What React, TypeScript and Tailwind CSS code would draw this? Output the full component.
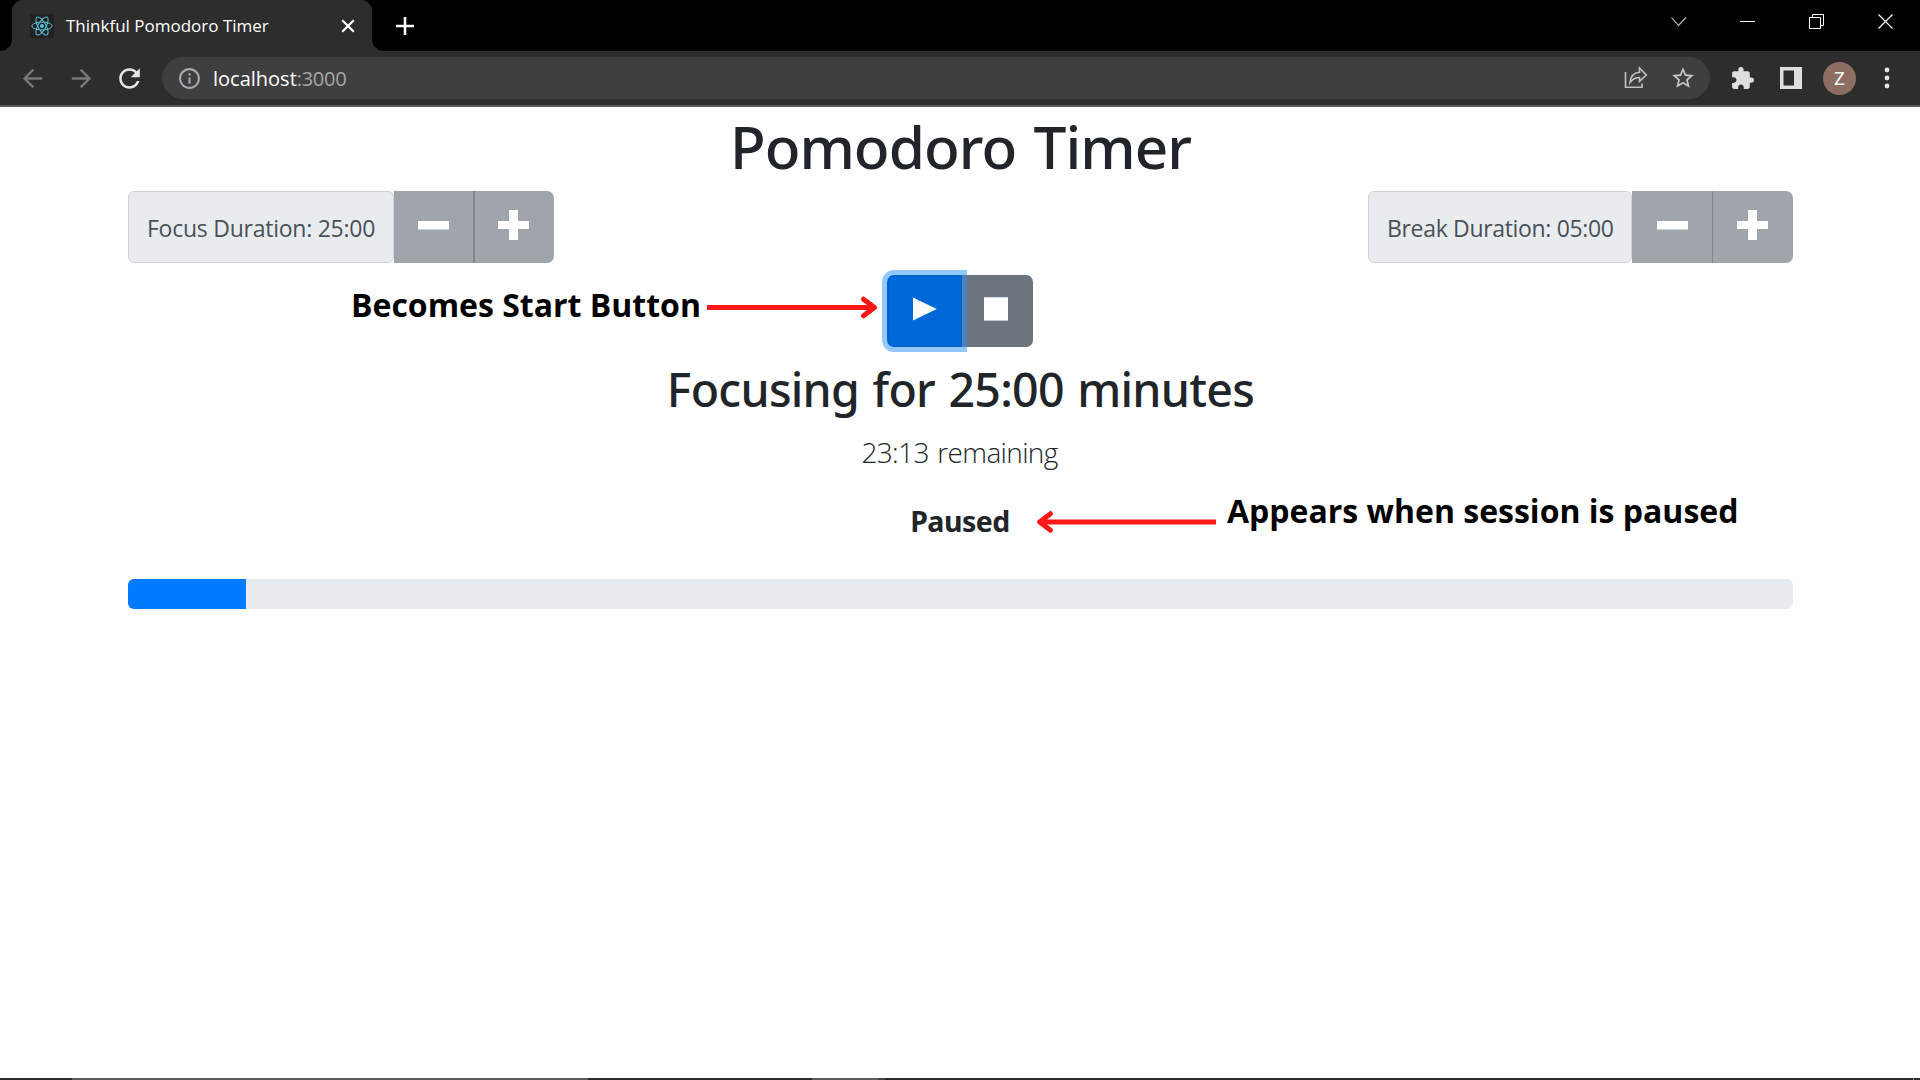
import React from "react";

const MD = {
  back: "M20 11H7.83l5.59-5.59L12 4l-8 8 8 8 1.41-1.41L7.83 13H20v-2z",
  forward: "M12 4l-1.41 1.41L16.17 11H4v2h12.17l-5.58 5.59L12 20l8-8z",
  refresh:
    "M17.65 6.35C16.2 4.9 14.21 4 12 4c-4.42 0-7.99 3.58-7.99 8s3.57 8 7.99 8c3.73 0 6.84-2.55 7.73-6h-2.08c-.82 2.33-3.04 4-5.65 4-3.31 0-6-2.69-6-6s2.69-6 6-6c1.66 0 3.14.69 4.22 1.78L13 11h7V4l-2.35 2.35z",
  info: "M11 7h2v2h-2zm0 4h2v6h-2zm1-9C6.48 2 2 6.48 2 12s4.48 10 10 10 10-4.48 10-10S17.52 2 12 2zm0 18c-4.41 0-8-3.59-8-8s3.59-8 8-8 8 3.59 8 8-3.59 8-8 8z",
  star: "M22 9.24l-7.19-.62L12 2 9.19 8.63 2 9.24l5.46 4.73L5.82 21 12 17.27 18.18 21l-1.63-7.03L22 9.24zM12 15.4l-3.76 2.27 1-4.28-3.32-2.88 4.38-.38L12 6.1l1.71 4.04 4.38.38-3.32 2.88 1 4.28L12 15.4z",
  puzzle:
    "M20.5 11H19V7c0-1.1-.9-2-2-2h-4V3.5a2.5 2.5 0 0 0-5 0V5H4c-1.1 0-1.99.9-1.99 2v3.8H3.5c1.49 0 2.7 1.21 2.7 2.7s-1.21 2.7-2.7 2.7H2V20c0 1.1.9 2 2 2h3.8v-1.5c0-1.49 1.21-2.7 2.7-2.7 1.49 0 2.7 1.21 2.7 2.7V22H17c1.1 0 2-.9 2-2v-4h1.5a2.5 2.5 0 0 0 0-5z",
};

function Icon({ d, className }: { d: string; className: string }) {
  return (
    <svg viewBox="0 0 24 24" fill="currentColor" className={`shrink-0 ${className}`}>
      <path d={d} />
    </svg>
  );
}

function TabStrip() {
  return (
    <div className="flex h-[51px] bg-black">
      <svg className="h-[51px] w-3 shrink-0" viewBox="0 0 12 51">
        <path d="M0 51H12V39A12 12 0 0 1 0 51Z" fill="#2d2d2d" />
      </svg>
      <div className="flex w-[360px] items-center rounded-t-[11px] bg-[#2d2d2d] pl-[18px] pr-[16px]">
        <svg className="size-6 shrink-0" viewBox="0 0 24 24">
          <rect width="24" height="24" rx="1.5" fill="#212121" />
          <g fill="none" stroke="#58c4dc" strokeWidth="1">
            <ellipse cx="12" cy="12" rx="10.2" ry="3.9" />
            <ellipse cx="12" cy="12" rx="10.2" ry="3.9" transform="rotate(60 12 12)" />
            <ellipse cx="12" cy="12" rx="10.2" ry="3.9" transform="rotate(120 12 12)" />
          </g>
          <circle cx="12" cy="12" r="2" fill="#58c4dc" />
        </svg>
        <span className="ml-3 whitespace-nowrap text-[17px] leading-6 text-white">
          Thinkful Pomodoro Timer
        </span>
        <svg className="ml-auto size-4 shrink-0" viewBox="0 0 16 16" stroke="#fff" strokeWidth="2.2">
          <path d="M2.2 2.2L13.8 13.8M13.8 2.2L2.2 13.8" />
        </svg>
      </div>
      <svg className="h-[51px] w-3 shrink-0" viewBox="0 0 12 51">
        <path d="M12 51H0V39A12 12 0 0 0 12 51Z" fill="#2d2d2d" />
      </svg>
      <svg className="ml-3 mt-[17px] size-[18px] shrink-0" viewBox="0 0 18 18" stroke="#fff" strokeWidth="2.6">
        <path d="M9 0V18M0 9H18" />
      </svg>
      <div className="ml-auto flex gap-[53px] pr-[26px] pt-[14px]">
        <svg className="size-[16px]" viewBox="0 0 16 16" fill="none" stroke="#c4c4c4" strokeWidth="1.1">
          <path d="M0.5 3.5L7.5 11.5L15 3.5" />
        </svg>
        <svg className="size-[16px]" viewBox="0 0 16 16" fill="#fff">
          <rect y="7" width="15" height="1" />
        </svg>
        <svg className="size-[16px]" viewBox="0 0 16 16" fill="none" stroke="#fff">
          <path d="M0.5 3.5H11.5V14.5H0.5ZM3.5 3.5V0.5H14.5V11.5H11.5" />
        </svg>
        <svg className="size-[16px]" viewBox="0 0 16 16" fill="none" stroke="#fff" strokeWidth="1.2">
          <path d="M0.5 0.5L14.5 14.5M14.5 0.5L0.5 14.5" />
        </svg>
      </div>
    </div>
  );
}

function Toolbar() {
  return (
    <div className="flex h-14 items-center border-b-2 border-[#585858] bg-[#2d2d2d] pl-[18px] pr-[20px]">
      <Icon d={MD.back} className="size-[29px] text-[#777777]" />
      <Icon d={MD.forward} className="ml-[20px] size-[29px] text-[#777777]" />
      <Icon d={MD.refresh} className="ml-[18px] size-[31px] text-[#e4e4e4]" />
      <div className="ml-[17px] flex h-[42px] w-[1548px] items-center rounded-full bg-[#3f3f3f] pl-[15px] pr-[14px]">
        <Icon d={MD.info} className="size-[25px] text-[#a6aab0]" />
        <span className="ml-[11px] pt-px text-[20px] leading-7 text-white">
          localhost<span className="tracking-[-0.3px] text-[#a6a6a6]">:3000</span>
        </span>
        <svg className="ml-auto size-6 shrink-0" viewBox="0 0 24 24" fill="none" stroke="#c2c2c2" strokeWidth="1.6">
          <path d="M1.5 6V21.2H18V17.5" />
          <path d="M6 16.5C6.5 10.5 10 6.8 15.5 6.3V2L22.3 9L15.5 15.3V11.5C11.5 11.5 8.5 13 6 16.5Z" />
        </svg>
        <Icon d={MD.star} className="ml-[22px] size-[26px] text-[#c6c6c6]" />
      </div>
      <Icon d={MD.puzzle} className="ml-[20px] size-[25px] text-[#dedede]" />
      <svg className="ml-[25px] size-[22px] shrink-0" viewBox="0 0 22 22">
        <path fillRule="evenodd" d="M0 0H22V22H0ZM3.5 3.5V18.5H14V3.5Z" fill="#dedede" />
      </svg>
      <div className="ml-[21px] flex size-[33px] shrink-0 items-center justify-center rounded-full bg-[#8d6e63] pt-px font-[Roboto,sans-serif] text-[18px] leading-none text-white">
        Z
      </div>
      <svg className="ml-auto h-[22px] w-[26px] shrink-0" viewBox="0 0 26 22" fill="#e4e4e4">
        <circle cx="13" cy="3" r="2.4" />
        <circle cx="13" cy="11" r="2.4" />
        <circle cx="13" cy="19" r="2.4" />
      </svg>
    </div>
  );
}

interface DurationControlProps {
  label: string;
  labelClass: string;
  minusClass: string;
  plusClass: string;
}

function DurationControl({ label, labelClass, minusClass, plusClass }: DurationControlProps) {
  return (
    <div className="flex h-[72px]">
      <div
        className={`flex items-center whitespace-nowrap rounded-[6px] border border-[#ced4da] bg-[#e9ecef] pl-[18px] pt-[3px] text-[23px] text-[#495057] ${labelClass}`}
      >
        {label}
      </div>
      <button className={`flex bg-[#9fa5aa] pt-[29.5px] ${minusClass}`}>
        <svg className="h-[9px] w-[31px]" viewBox="0 0 31 9" fill="#fff">
          <rect width="31" height="8.5" />
        </svg>
      </button>
      <button className={`flex rounded-r-[7px] border-[#80878e] bg-[#9fa5aa] pt-[19px] ${plusClass}`}>
        <svg className="h-[30px] w-[31px]" viewBox="0 0 31 30" fill="#fff">
          <path d="M11 0H20V11H31V19H20V30H11V19H0V11H11Z" />
        </svg>
      </button>
    </div>
  );
}

export default function App() {
  return (
    <div className="relative flex h-[1080px] w-[1920px] flex-col overflow-hidden bg-white font-['Open_Sans','Noto_Sans',sans-serif] text-[#212529]">
      <TabStrip />
      <Toolbar />
      <main className="flex flex-1 flex-col pl-32 pr-[127px]">
        <h1 className="mt-[3px] h-[81px] text-center font-['Noto_Sans',sans-serif] text-[58.5px] font-medium leading-[72px] tracking-[-0.95px] [word-spacing:3px]">
          Pomodoro Timer
        </h1>
        <div className="flex justify-between">
          <DurationControl
            label="Focus Duration: 25:00"
            labelClass="w-[266px] tracking-[-0.25px]"
            minusClass="w-[79px] pl-[24px]"
            plusClass="w-[81px] border-l-2 pl-[23px]"
          />
          <DurationControl
            label="Break Duration: 05:00"
            labelClass="w-[264px] tracking-[-0.33px]"
            minusClass="w-20 pl-[25px]"
            plusClass="w-[81px] border-l pl-[24px]"
          />
        </div>
        <div className="mt-3 ml-[759px] flex h-[72px]">
          <button className="z-10 flex w-[75px] justify-center rounded-l-[7px] border-2 border-[#0062cc] bg-[#0069d9] pt-[20px] shadow-[0_0_0_5px_rgba(38,143,255,0.5)]">
            <svg className="size-6" viewBox="0 0 24 24" fill="#fff">
              <path d="M0 0.5L23.7 12L0 23.5Z" />
            </svg>
          </button>
          <button className="-ml-px flex w-[72px] rounded-r-[7px] bg-[#6c757d] pl-[23px] pt-[22px]">
            <svg className="size-6" viewBox="0 0 24 24" fill="#fff">
              <rect y="0.3" width="24" height="23.3" />
            </svg>
          </button>
        </div>
        <h2 className="mt-[12px] text-center font-['Noto_Sans',sans-serif] text-[46.5px] font-medium leading-[60px] tracking-[-0.72px] [word-spacing:2px]">
          Focusing for 25:00 minutes
        </h2>
        <p className="mt-[9px] -ml-[2px] text-center text-[28px] font-light leading-[48px] tracking-[-0.65px] [word-spacing:2px]">
          23:13 remaining
        </p>
        <h5 className="mt-[27px] -ml-px text-center font-['Noto_Sans',sans-serif] text-[28.5px] font-bold leading-9 tracking-[-0.5px]">
          Paused
        </h5>
        <div className="mt-[40px] flex h-[30px] overflow-hidden rounded-[6px] bg-[#e9ecef]">
          <div className="w-[118px] bg-[#007bff]" />
        </div>
      </main>
      <footer className="flex h-0.5 bg-[#2d292a]">
        <div className="ml-[72px] w-[516px] bg-[#5e5b5b]" />
        <div className="ml-[224px] w-[66px] bg-[#5e5b5b]" />
        <div className="w-[7px] bg-[#454243]" />
        <div className="ml-auto mr-[6px] w-px bg-[#8a8888]" />
      </footer>

      <div className="absolute left-[351px] top-[283px] flex items-center text-[32px] font-bold leading-[44px] text-black">
        <span className="whitespace-nowrap">Becomes Start Button</span>
        <svg className="ml-[6px] mt-[4px] h-6 w-[172px]" viewBox="0 0 172 24" fill="none" stroke="#ff1616" strokeWidth="5">
          <path d="M0 12.5H166" />
          <path d="M156.5 4.2L167.5 12.5L156.5 20.8" strokeLinecap="round" strokeLinejoin="round" />
        </svg>
      </div>
      <div className="absolute left-[1036px] top-[489px] flex items-start text-[32px] font-bold leading-[44px] text-black">
        <svg className="mt-[21px] h-6 w-[180px]" viewBox="0 0 180 24" fill="none" stroke="#ff1616" strokeWidth="5">
          <path d="M6 12H180" />
          <path d="M14.5 3.7L3.7 12L14.5 20.3" strokeLinecap="round" strokeLinejoin="round" />
        </svg>
        <span className="ml-[11px] whitespace-nowrap">Appears when session is paused</span>
      </div>
    </div>
  );
}
